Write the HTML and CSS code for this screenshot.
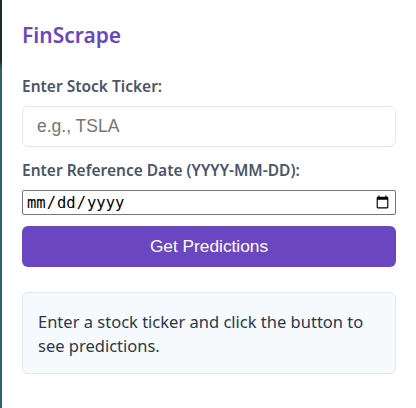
FILE: index.html
```html
<!DOCTYPE html>
<html lang="en">
<head>
<meta charset="utf-8">
<title>FinScrape</title>
<link rel="stylesheet" href="styles.css">
</head>
<body>
<div class="edge"></div>
<main class="popup">
  <h1 class="title">FinScrape</h1>
  <label class="label" for="ticker">Enter Stock Ticker:</label>
  <input class="text-input" id="ticker" type="text" placeholder="e.g., TSLA">
  <label class="label label-date" for="date">Enter Reference Date (YYYY-MM-DD):</label>
  <input class="date-input" id="date" type="date">
  <button class="btn" type="button">Get Predictions</button>
  <div class="result">Enter a stock ticker and click the button to see predictions.</div>
</main>
</body>
</html>
```
FILE: styles.css
```css
html, body {
  margin: 0;
  height: 100%;
  background: #ffffff;
}
body {
  display: flex;
  font-family: "Noto Sans", "Open Sans", sans-serif;
}
.edge {
  width: 2px;
  flex: none;
  background: linear-gradient(#1e2b2b 0, #1e2b2b 60px, #2f6464 70px, #2f6464 100%);
}
.popup {
  flex: 1;
  padding: 20px 20px 0 20px;
  display: flex;
  flex-direction: column;
}
.title {
  margin: 0 0 26px;
  font-size: 21px;
  font-weight: 600;
  color: #6b46c1;
  line-height: 30px;
}
.label {
  font-size: 15.5px;
  font-weight: 600;
  color: #4a5568;
  line-height: 20px;
  margin-bottom: 10px;
}
.label-date {
  margin-top: 13px;
}
.text-input {
  box-sizing: border-box;
  height: 41px;
  border: 1px solid #e2e8f0;
  border-radius: 6px;
  padding: 0 14px;
  font-family: "Liberation Sans", Arial, sans-serif;
  font-size: 17.5px;
  outline: none;
}
.text-input::placeholder {
  color: #757575;
}
.date-input {
  box-sizing: border-box;
  height: 25px;
  margin: 0;
  padding: 0 3px;
  font-family: "DejaVu Sans Mono", monospace;
  font-size: 15.5px;
  border: 1px solid #767676;
  border-radius: 2px;
  background: #ffffff;
  color: #000000;
}
.btn {
  margin-top: 11px;
  height: 41px;
  border: none;
  border-radius: 6px;
  background: #6b46c1;
  color: #ffffff;
  font-family: "Liberation Sans", Arial, sans-serif;
  font-size: 17.3px;
}
.result {
  margin-top: 25px;
  background: #f7fafc;
  border: 1px solid #e2e8f0;
  border-radius: 6px;
  padding: 17px 15px 15px;
  font-size: 16.5px;
  line-height: 24px;
  color: #2d3748;
}
```
